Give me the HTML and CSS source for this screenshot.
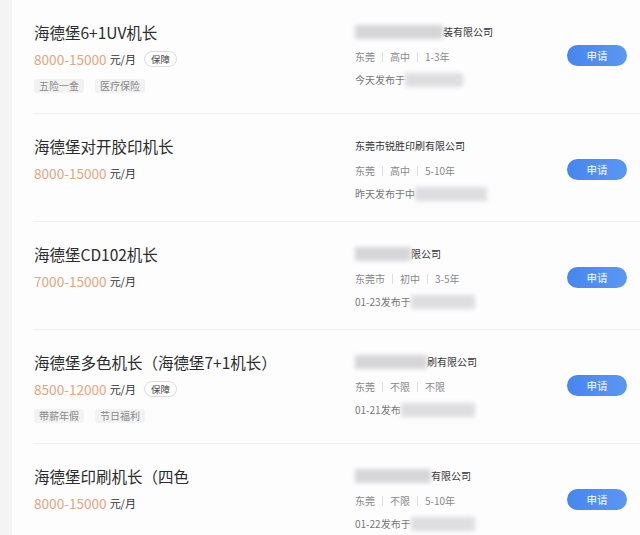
FILE: index.html
```
<!DOCTYPE html>
<html lang="zh-CN">
<head>
    <meta charset="UTF-8">
    <meta name="viewport" content="width=device-width, initial-scale=1.0">
    <title>职位列表</title>
    <link rel="stylesheet" href="styles.css">
</head>
<body class="body">

    <div class="lista">

        <div class="vaga">
            <div class="esq">
                <h3 class="titulo">海德堡6+1UV机长</h3>
                <p class="salario"><span class="valor">8000-15000</span> 元/月 <span class="selo">保障</span></p>
                <div class="tags"><span>五险一金</span><span>医疗保险</span></div>
            </div>
            <div class="dir">
                <p class="empresa"><span class="borrao" style="width: 88px"></span>装有限公司</p>
                <p class="info">东莞<i></i>高中<i></i>1-3年</p>
                <p class="data">今天发布于<span class="borrao cinza" style="width: 58px"></span></p>
            </div>
            <a class="btn">申请</a>
        </div>

        <div class="vaga">
            <div class="esq">
                <h3 class="titulo">海德堡对开胶印机长</h3>
                <p class="salario"><span class="valor">8000-15000</span> 元/月</p>
            </div>
            <div class="dir">
                <p class="empresa">东莞市锐胜印刷有限公司</p>
                <p class="info">东莞<i></i>高中<i></i>5-10年</p>
                <p class="data">昨天发布于中<span class="borrao cinza" style="width: 72px"></span></p>
            </div>
            <a class="btn">申请</a>
        </div>

        <div class="vaga">
            <div class="esq">
                <h3 class="titulo">海德堡CD102机长</h3>
                <p class="salario"><span class="valor">7000-15000</span> 元/月</p>
            </div>
            <div class="dir">
                <p class="empresa"><span class="borrao" style="width: 56px"></span>限公司</p>
                <p class="info">东莞市<i></i>初中<i></i>3-5年</p>
                <p class="data">01-23发布于<span class="borrao cinza" style="width: 64px"></span></p>
            </div>
            <a class="btn">申请</a>
        </div>

        <div class="vaga">
            <div class="esq">
                <h3 class="titulo">海德堡多色机长（海德堡7+1机长）</h3>
                <p class="salario"><span class="valor">8500-12000</span> 元/月 <span class="selo">保障</span></p>
                <div class="tags"><span>带薪年假</span><span>节日福利</span></div>
            </div>
            <div class="dir">
                <p class="empresa"><span class="borrao" style="width: 72px"></span>刷有限公司</p>
                <p class="info">东莞<i></i>不限<i></i>不限</p>
                <p class="data">01-21发布<span class="borrao cinza" style="width: 74px"></span></p>
            </div>
            <a class="btn">申请</a>
        </div>

        <div class="vaga">
            <div class="esq">
                <h3 class="titulo">海德堡印刷机长（四色</h3>
                <p class="salario"><span class="valor">8000-15000</span> 元/月</p>
            </div>
            <div class="dir">
                <p class="empresa"><span class="borrao" style="width: 76px"></span>有限公司</p>
                <p class="info">东莞<i></i>不限<i></i>5-10年</p>
                <p class="data">01-22发布于<span class="borrao cinza" style="width: 64px"></span></p>
            </div>
            <a class="btn">申请</a>
        </div>

    </div>

</body>
</html>
```

FILE: styles.css
```
.body{
    margin: 0;
    background-color: #f4f4f5;
    font-family: "Noto Sans CJK SC", "Noto Sans", sans-serif;
}
.lista{
    margin-left: 12px;
    background-color: #fdfdfe;
    padding-left: 21px;
    min-height: 535px;
}
.vaga{
    display: grid;
    grid-template-columns: 321px 1fr auto;
    align-items: start;
    padding: 21px 13px 20px 1px;
    border-bottom: 1px solid #efeff1;
}
.titulo{
    margin: 0;
    font-size: 15.5px;
    font-weight: normal;
    color: #2b2b2b;
    line-height: 22px;
}
.salario{
    margin: 6px 0 0 0;
    font-size: 11px;
    color: #333;
    line-height: 20px;
    display: flex;
    align-items: center;
    gap: 3px;
}
.valor{
    font-size: 13.6px;
    color: #e2a67c;
}
.selo{
    margin-left: 5px;
    font-size: 9.5px;
    line-height: 12px;
    padding: 1px 6px;
    border: 1px solid #dcdcdc;
    border-radius: 8px;
    color: #444;
}
.tags{
    margin-top: 10px;
    display: flex;
    gap: 11px;
}
.tags span{
    font-size: 10px;
    line-height: 14px;
    padding: 0 5px;
    background-color: #f2f2f3;
    border-radius: 3px;
    color: #888;
}
.dir p{
    margin: 0;
    font-size: 10px;
    line-height: 14px;
}
.empresa{
    color: #333;
    margin-top: 4px !important;
    display: flex;
    align-items: center;
}
.info{
    color: #888;
    margin-top: 11px !important;
    display: flex;
    align-items: center;
}
.info i{
    display: inline-block;
    width: 1px;
    height: 10px;
    background-color: #dedede;
    margin: 0 7px;
}
.data{
    color: #777;
    margin-top: 9px !important;
    display: flex;
    align-items: center;
}
.borrao{
    display: inline-block;
    height: 14px;
    background-color: #d6d6d8;
    filter: blur(2px);
}
.cinza{
    background-color: #dedee0;
}
.btn{
    margin-top: 24px;
    width: 60px;
    height: 21px;
    border-radius: 11px;
    background: linear-gradient(90deg, #4687ee, #5b97f2);
    color: #fff;
    font-size: 10.5px;
    line-height: 21px;
    text-align: center;
}
```
